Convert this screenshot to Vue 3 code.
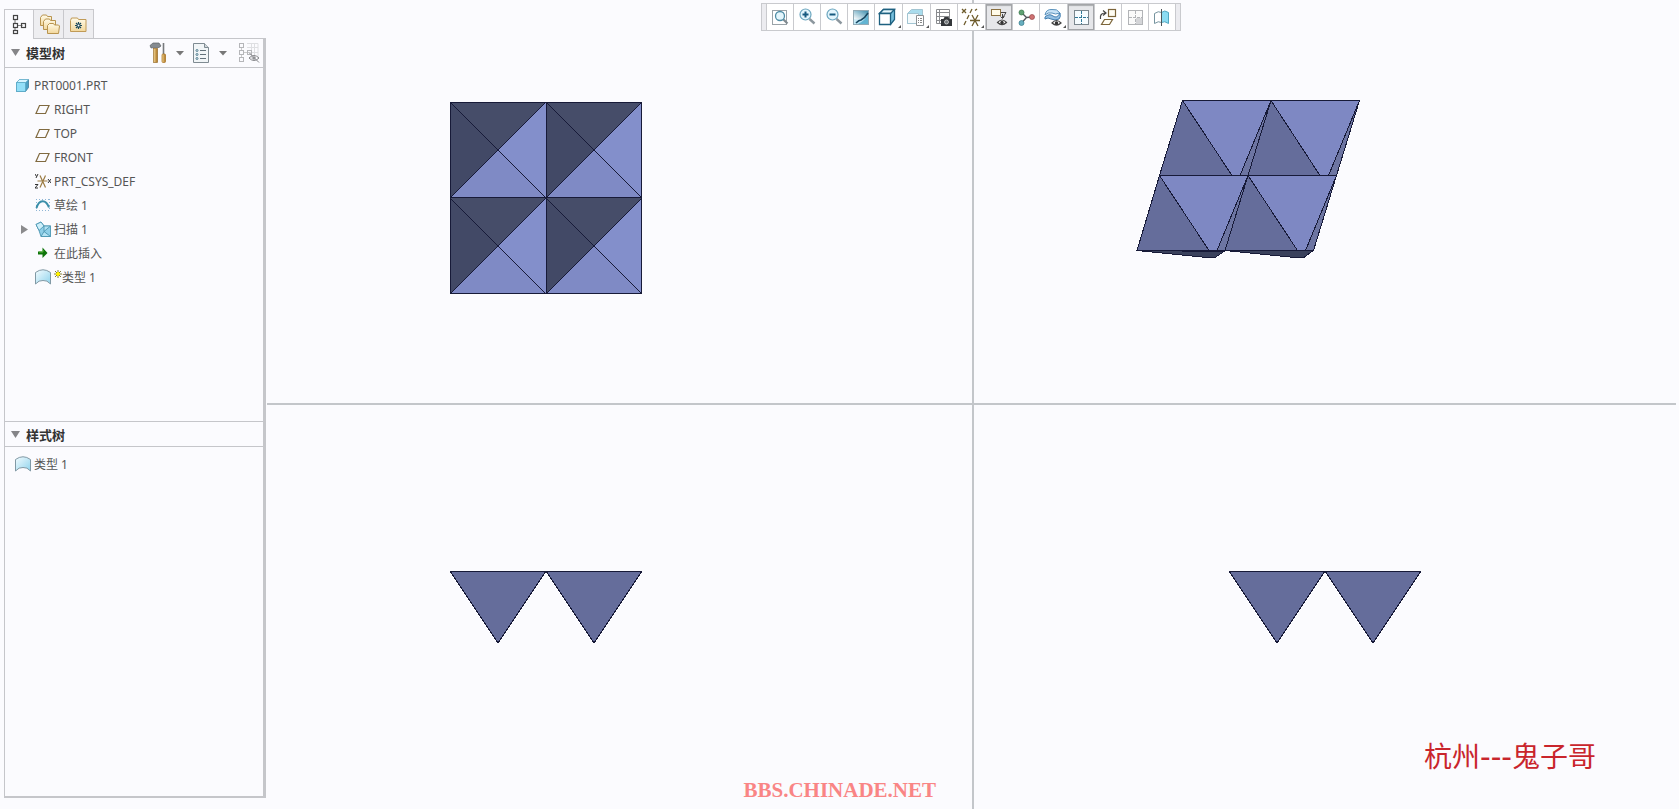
<script setup>
import { ref } from 'vue';

const activeTab = ref('model');
const modelOpen = ref(true);
const styleOpen = ref(true);

const modelTree = [
  { name: 'RIGHT', icon: 'plane' },
  { name: 'TOP', icon: 'plane' },
  { name: 'FRONT', icon: 'plane' },
  { name: 'PRT_CSYS_DEF', icon: 'csys' },
  { name: '草绘 1', icon: 'sketch' },
  { name: '扫描 1', icon: 'sweep', expandable: true },
  { name: '在此插入', icon: 'insert' },
  { name: '类型 1', icon: 'style', isNew: true }
];

// the two teeth in the front and side views
const frontTeeth = ['183,166 279,166 231,238', '279,166 375,166 327,238'];
const sideTeeth = ['255,166 351,166 303,238', '351,166 447,166 399,238'];

const pyramids = [
  { x: 183, y: 102 },
  { x: 279, y: 102 },
  { x: 183, y: 198 },
  { x: 279, y: 198 }
];
</script>

<template>
  <div class="app">
    <svg class="defs" aria-hidden="true">
      <defs>
        <linearGradient id="cyan" x1="0" y1="0" x2="1" y2="1">
          <stop offset="0" stop-color="#f4fcff" />
          <stop offset="1" stop-color="#8fd3ec" />
        </linearGradient>
        <linearGradient id="folder" x1="0" y1="0" x2="0" y2="1">
          <stop offset="0" stop-color="#fffbe9" />
          <stop offset="1" stop-color="#f2d79b" />
        </linearGradient>
        <linearGradient id="wood" x1="0" y1="0" x2="1" y2="0">
          <stop offset="0" stop-color="#f5d898" />
          <stop offset="1" stop-color="#a8701c" />
        </linearGradient>
        <linearGradient id="shade" x1="0" y1="1" x2="1" y2="0">
          <stop offset="0" stop-color="#ffffff" />
          <stop offset="1" stop-color="#3f8fae" />
        </linearGradient>
      </defs>
    </svg>

    <aside class="sidebar">
      <nav class="tabs">
        <button :class="{ active: activeTab === 'model' }" aria-label="模型树" @click="activeTab = 'model'">
          <svg width="28" height="28" fill="none" stroke="#444" stroke-width="1.2">
            <path d="M10 9v4M10 17v3M12.500 14.500h5" stroke="#888" />
            <rect x="8.500" y="4.500" width="4" height="4" />
            <rect x="8.500" y="12.500" width="4" height="4" />
            <rect x="8.500" y="19.500" width="4" height="3" />
            <rect x="16.500" y="12.500" width="4" height="4" />
          </svg>
        </button>
        <button :class="{ active: activeTab === 'folders' }" aria-label="文件夹" @click="activeTab = 'folders'">
          <svg width="28" height="28" fill="url(#folder)" stroke="#b8944f">
            <path d="M6.500 15.500v-8l2-2.500h4l1 1.500h4v9z" />
            <path d="M9.500 19.500v-8l2-2.500h4l1 1.500h5v9z" />
            <path d="M13.500 23.500v-8l2-2h4l1 1.500h4l1 1-1 7.500z" />
          </svg>
        </button>
        <button :class="{ active: activeTab === 'favorites' }" aria-label="收藏夹" @click="activeTab = 'favorites'">
          <svg width="28" height="28" fill="none">
            <path d="M6.500 21.500v-11l1-2.500h6l1 1.500h7.500v12z" fill="url(#folder)" stroke="#c09a56" />
            <path d="M14.500 12v7M11 15.500h7M12 13l5 5M17 13l-5 5" stroke="#1c4a5c" stroke-width="1.200" />
            <circle cx="14.500" cy="15.500" r="1" fill="#fff" />
          </svg>
        </button>
      </nav>

      <div class="panel">
        <section class="pane model-pane">
          <header class="pane-head">
            <button class="title" @click="modelOpen = !modelOpen">
              <svg width="10" height="8"><path d="M0 0h9L4.500 7z" fill="#858588" /></svg>
              模型树
            </button>
            <div class="pane-tools">
              <button aria-label="设置">
                <svg width="18" height="22" fill="none">
                  <path d="M1 3.500l3-2.500h6l2 3-2 1.500H5L2 6z" fill="#858b90" stroke="#5d6367" stroke-width=".7" />
                  <rect x="4.500" y="6.500" width="4" height="14" fill="url(#wood)" stroke="#99702e" stroke-width=".7" />
                  <path d="M14.500 1v11" stroke="#77797c" stroke-width="1.600" />
                  <rect x="13" y="12" width="3.500" height="8.500" rx="1" fill="url(#wood)" stroke="#a8701c" stroke-width=".7" />
                </svg>
              </button>
              <button aria-label="设置选项"><svg width="8" height="5"><path d="M0 0h8L4 4.500z" fill="#777" /></svg></button>
              <button aria-label="显示">
                <svg width="17" height="22" fill="none" stroke="#7f8b92">
                  <path d="M.5 1.500h11l4 4v15H.5z" fill="#f1f5f7" />
                  <path d="M11.500 1.500v4h4" fill="#cfd6da" />
                  <path d="M7 8.500h6M7 12.500h6M7 16.500h6" stroke="#63717a" />
                  <circle cx="4" cy="8.500" r="1" stroke="#527f91" />
                  <circle cx="4" cy="12.500" r="1" stroke="#527f91" />
                  <circle cx="4" cy="16.500" r="1" stroke="#527f91" />
                </svg>
              </button>
              <button aria-label="显示选项"><svg width="8" height="5"><path d="M0 0h8L4 4.500z" fill="#777" /></svg></button>
              <button class="hide-items" aria-label="隐藏项">
                <svg width="21" height="22" fill="none" stroke="#b5b6b9">
                  <path d="M8 1.500h11v14M8 5.500h11M8 10.500h11M12.500 2v15M15.500 2v12" stroke="#dedfe2" />
                  <path d="M2.500 6v3M2.500 13v3M5 10.500h4" stroke="#ccc" />
                  <rect x=".5" y="1.500" width="4" height="4" />
                  <rect x=".5" y="8.500" width="4" height="4" />
                  <rect x=".5" y="15.500" width="4" height="4" />
                  <rect x="8.500" y="8.500" width="4" height="4" />
                  <path d="M10 16q5-5 10 0q-5 5-10 0zM10 10.500l10 10" stroke="#838488" />
                  <circle cx="15" cy="16" r="1.500" fill="#838488" />
                </svg>
              </button>
            </div>
          </header>
          <ul v-if="modelOpen" class="tree">
            <li>
              <svg class="icon" width="16" height="16" stroke="#3c7e9c" stroke-width=".8">
                <path d="M1.500 5.500l3-3h9v8l-3 4h-9z" fill="#4ba0c4" />
                <path d="M1.500 5.500l3-3h9l-3 3z" fill="#d8f5ff" stroke="#6fb5cf" />
                <path d="M1.500 5.500h9v9h-9z" fill="#93dff8" stroke="#5aa9c6" />
              </svg>
              <span>PRT0001.PRT</span>
            </li>
            <li v-for="item in modelTree" :key="item.name">
              <button v-if="item.expandable" class="twisty" aria-label="展开">
                <svg width="8" height="9"><path d="M0 0v9l7-4.500z" fill="#8b8b8d" /></svg>
              </button>
              <span v-else class="twisty"></span>
              <svg v-if="item.icon === 'plane'" class="icon" width="16" height="16" fill="none">
                <path d="M4.500 4.500h9.500l-3.500 8H1z" stroke="#806a40" stroke-width="1.200" />
              </svg>
              <svg v-else-if="item.icon === 'csys'" class="icon" width="16" height="16" fill="none">
                <path d="M2.500 8h10M5 2.500l5.500 12M10.500 2.500L5 14.500" stroke="#9b7b42" stroke-width="1.200" />
                <path d="M0 1l1.500 2.500M3 1L1 5M0 11.500h3L0 15h3M13 6l3 4M16 6l-3 4" stroke="#333" />
              </svg>
              <svg v-else-if="item.icon === 'sketch'" class="icon" width="16" height="16" fill="none">
                <path d="M1 2.500h14M1 13.500h14M1.500 2v12M14.500 2v12" stroke="#8fb6d5" stroke-dasharray="1 2" />
                <path d="M1.500 11C4 2 11 2 14 10.500" stroke="#3b8fa9" stroke-width="2" />
              </svg>
              <svg v-else-if="item.icon === 'sweep'" class="icon" width="16" height="16" stroke="#4c96b2" stroke-width=".9">
                <path d="M1 3.500l5-2.500 3 4h6.500v10.500H6l-2-6z" fill="#8fcfe8" />
                <path d="M1 3.500l5-2.500 3 4-5 4.500z" fill="#cdeffa" />
                <path d="M9 5l0 5.500 6.500-5.500zM9 10.500l6.500 5H6z" fill="#b4e3f4" />
              </svg>
              <svg v-else-if="item.icon === 'insert'" class="icon" width="16" height="16">
                <path d="M3 6.500h4.500v-4l5 5.500-5 5v-3.500H3z" fill="#0e7409" />
                <path d="M4 7h4V5" fill="none" stroke="#59b53d" />
              </svg>
              <svg v-else class="icon" width="16" height="16">
                <path d="M.5 15V3.500Q8-2 15.500 3.500V15Q12 11 8 11.500Q4 11 .5 15z" fill="url(#cyan)" stroke="#8199a5" />
              </svg>
              <svg v-if="item.isNew" class="new" width="8" height="16" fill="none">
                <path d="M4 1v8M0 5h8M1 2l6 6M7 2L1 8" stroke="#858038" />
                <path d="M4 3v4M2 5h4" stroke="#fff200" stroke-width="2" />
              </svg>
              <span>{{ item.name }}</span>
            </li>
          </ul>
        </section>

        <section class="pane style-pane">
          <header class="pane-head">
            <button class="title" @click="styleOpen = !styleOpen">
              <svg width="10" height="8"><path d="M0 0h9L4.500 7z" fill="#858588" /></svg>
              样式树
            </button>
          </header>
          <ul v-if="styleOpen" class="tree">
            <li>
              <svg class="icon" width="16" height="16">
                <path d="M.5 15V3.500Q8-2 15.500 3.500V15Q12 11 8 11.500Q4 11 .5 15z" fill="url(#cyan)" stroke="#8199a5" />
              </svg>
              <span>类型 1</span>
            </li>
          </ul>
        </section>
      </div>
    </aside>

    <main class="workspace">
      <div class="view top left">
        <svg class="canvas" role="img" aria-label="俯视图">
          <g v-for="p in pyramids" :key="p.x + '-' + p.y" :transform="`translate(${p.x} ${p.y})`">
            <path d="M0 0h96L48 48z" fill="#464d69" />
            <path d="M0 0v96l48-48z" fill="#424966" />
            <path d="M96 0v96L48 48z" fill="#838fcb" />
            <path d="M0 96h96L48 48z" fill="#7f8ac5" />
            <path class="edge" d="M0 0l96 96M96 0L0 96" />
          </g>
          <path class="edge" d="M183.500 102.500h191v191h-191zM279.500 102.500v191M183.500 197.500h191" />
        </svg>
      </div>

      <div class="view top right">
        <svg class="canvas" role="img" aria-label="斜视图">
          <g class="edge">
            <path d="M163 250.500l70 7h8l9-6z" fill="#3a415c" />
            <path d="M251 250.500l70 7h9l9-7z" fill="#3a415c" />
            <path d="M208.500 100.500h177l-46 150H163z" fill="#6d75a2" />
            <path d="M208.500 100.500l49.500 75h-72.500z" fill="#656d9b" />
            <path d="M297 100.500l49 75h-72z" fill="#656d9b" />
            <path d="M185.500 175.500l49.500 75h-72z" fill="#656d9b" />
            <path d="M274 175.500l49.500 75H251z" fill="#656d9b" />
            <path d="M208.500 100.500H297l-31 75h-8z" fill="#7e88c3" />
            <path d="M297 100.500h88.500l-31 75H346z" fill="#7e88c3" />
            <path d="M185.500 175.500H274l-31 75h-8z" fill="#7e88c3" />
            <path d="M274 175.500h88.500l-31 75h-8z" fill="#7e88c3" />
          </g>
        </svg>
      </div>

      <div class="view left">
        <svg class="canvas" role="img" aria-label="前视图">
          <polygon v-for="t in frontTeeth" :key="t" class="edge tooth" :points="t" />
        </svg>
        <span class="site">BBS.CHINADE.NET</span>
      </div>

      <div class="view right">
        <svg class="canvas" role="img" aria-label="右视图">
          <polygon v-for="t in sideTeeth" :key="t" class="edge tooth" :points="t" />
        </svg>
        <span class="author">杭州<span class="dashes">---</span>鬼子哥</span>
      </div>

      <div class="toolbar" role="toolbar">
        <span class="grip"></span>
        <button aria-label="重新调整">
          <svg width="26" height="26" fill="none">
            <rect x="5.500" y="6.500" width="14" height="14" stroke="#9aa3a8" />
            <path d="M16 15l4.500 4.500" stroke="#808a90" stroke-width="2.200" />
            <circle cx="13" cy="12" r="4.500" fill="#e4f6fc" stroke="#4f8da6" stroke-width="1.300" />
          </svg>
        </button>
        <button aria-label="放大">
          <svg width="26" height="26" fill="none">
            <path d="M15.500 15l5 4.500" stroke="#8c979e" stroke-width="2.400" />
            <circle cx="11.500" cy="10.500" r="5.500" fill="#e2f5fc" stroke="#6ba6bf" stroke-width="1.200" />
            <path d="M8.500 10.500h6M11.500 7.500v6" stroke="#165a80" stroke-width="2" />
          </svg>
        </button>
        <button aria-label="缩小">
          <svg width="26" height="26" fill="none">
            <path d="M15.500 15l5 4.500" stroke="#8c979e" stroke-width="2.400" />
            <circle cx="11.500" cy="10.500" r="5.500" fill="#e2f5fc" stroke="#6ba6bf" stroke-width="1.200" />
            <path d="M8.500 10.500h6" stroke="#165a80" stroke-width="2" />
          </svg>
        </button>
        <button aria-label="重画">
          <svg width="26" height="26" fill="none">
            <rect x="5.500" y="6.500" width="15" height="14" fill="url(#cyan)" stroke="#92aab5" />
            <path d="M6 7h14v3q-4 7-14 5z" fill="url(#shade)" />
            <path d="M20 10v10H10q7-3 10-10z" fill="#62b4d2" />
            <path d="M8 19q3-3 5-3q4-2 7-7" stroke="#174761" stroke-width="1.600" />
          </svg>
        </button>
        <button class="wide" aria-label="显示样式">
          <svg width="27" height="26" stroke="#1e6180" stroke-width="1.300">
            <path d="M4.500 9.500l4-4h11v10l-4 5z" fill="#76bfdc" />
            <path d="M4.500 9.500l4-4h11l-4 4z" fill="#e5f7fd" />
            <path d="M4.500 9.500h11v11h-11z" fill="#fff" />
            <path d="M26 21v3h-3z" fill="#555" stroke="none" />
          </svg>
        </button>
        <button class="wide" aria-label="已保存方向">
          <svg width="27" height="26" stroke="#a2c5d2">
            <path d="M4.500 9.500l4-4h11v10l-4 4h-11z" fill="#a8dced" />
            <path d="M4.500 9.500h11v10h-11z" fill="#f4fafc" />
            <path d="M13.500 11.500h7v10h-7z" fill="#fff" stroke="#8b8f92" />
            <path d="M15 14.500h1M17 14.500h2M15 16.500h1M17 16.500h2M15 18.500h1M17 18.500h2" stroke="#888" />
            <path d="M26 21v3h-3z" fill="#555" stroke="none" />
          </svg>
        </button>
        <button aria-label="视图管理器">
          <svg width="26" height="26" fill="none">
            <path d="M5.500 5.500h13v14h-13zM5.500 8.500h13M5.500 12.500h13M5.500 16.500h13M8.500 5.500v14" stroke="#8a8c8f" />
            <path d="M10 15h2.500l1-2h4l1 2H21v7H10z" fill="#34373a" />
            <circle cx="15.500" cy="18" r="2" fill="#73787b" stroke="#e8e8e8" stroke-width=".7" />
          </svg>
        </button>
        <button class="wide" aria-label="基准显示过滤器">
          <svg width="27" height="26" fill="none" stroke="#6e5c2c" stroke-width="1.300">
            <path d="M4 5l4 4M8 5L4 9M12 9l2-4M9 15l2-4M6 21l2-4M17 6.500l2-1.500" />
            <path d="M12 16.500h10M14 11l6 11M20 11l-6 11" />
            <path d="M26 21v3h-3z" fill="#555" stroke="none" />
          </svg>
        </button>
        <button class="pressed" aria-label="注释显示">
          <svg width="26" height="26" fill="none">
            <rect x="5.500" y="5.500" width="9" height="6" fill="#fffbe8" stroke="#8a7141" />
            <path d="M15 8.500h5l-3 5M16.500 10v4M14.500 12.500l2 2 2-2" stroke="#444" />
            <path d="M11.500 18.500q4.500-5 9 0q-4.500 4-9 0z" fill="#fff" stroke="#444" stroke-width="1.200" />
            <circle cx="16" cy="18.500" r="1.700" fill="#333" />
          </svg>
        </button>
        <button aria-label="旋转中心">
          <svg width="26" height="26">
            <path d="M8.500 8.500l5 5 6-.5M13.500 13.500l-5 5.500" fill="none" stroke="#50565a" stroke-width="1.300" />
            <circle cx="8.500" cy="8.500" r="2.500" fill="#5fa173" stroke="#357448" stroke-width=".7" />
            <circle cx="19" cy="13" r="2.500" fill="#cf7272" stroke="#97494c" stroke-width=".7" />
            <circle cx="8.500" cy="19" r="2.500" fill="#68aebe" stroke="#357c8d" stroke-width=".7" />
          </svg>
        </button>
        <button class="wide" aria-label="样式显示过滤器">
          <svg width="27" height="26" fill="none">
            <path d="M5 11Q6 5 12 5.500Q17 4.500 20 9Q15 11 12 9Q8 8 5 11z" fill="#c7e3f7" stroke="#5b92bc" />
            <path d="M5 13q4-4 8-1t7-3q1 4-1 6-4 2-8 0-3-2-6 0z" fill="#94c0e3" stroke="#417eb0" />
            <path d="M12 19q4.500-5 9 0q-4.500 4-9 0z" fill="#fff" stroke="#444" stroke-width="1.200" />
            <circle cx="16.500" cy="19" r="1.700" fill="#333" />
            <path d="M26 21v3h-3z" fill="#555" stroke="none" />
          </svg>
        </button>
        <button class="pressed" aria-label="显示所有视图">
          <svg width="26" height="26" fill="none">
            <rect x="6.500" y="6.500" width="14" height="14" fill="#f6fcff" stroke="#7b878e" />
            <path d="M13.500 7v13M7 13.500h13" stroke="#2f7896" stroke-dasharray="3 1" />
          </svg>
        </button>
        <button aria-label="设置活动平面方向">
          <svg width="26" height="26" fill="none" stroke="#7c653a" stroke-width="1.200">
            <rect x="13.500" y="5.500" width="7" height="7" fill="#fffdf3" />
            <path d="M9.500 15.500h8l-3 5H6.500z" fill="#fffdf3" />
            <path d="M5.500 15q-1-6 5-6M8 6.500l3 2.500-3 2.500" stroke="#444" />
          </svg>
        </button>
        <button aria-label="活动视图">
          <svg width="26" height="26" fill="none" stroke="#b2b4b7">
            <rect x="6.500" y="6.500" width="14" height="14" fill="#fafafa" />
            <path d="M14 14h6v6h-6z" fill="#d4d5d8" stroke="none" />
            <path d="M13.500 7v13M7 13.500h13" stroke-dasharray="3 1" />
          </svg>
        </button>
        <button aria-label="镜像">
          <svg width="26" height="26" stroke="#76949f">
            <path d="M5.500 9.500q4-3 7-1v10q-3-2-7 1z" fill="#fff" />
            <path d="M12.500 8.500q3-3 7 0v11q-4-3-7-1z" fill="#8bdcf2" stroke="#52a8c2" />
            <path d="M12.500 5v17" stroke="#4c5457" />
          </svg>
        </button>
        <span class="grip end"></span>
      </div>
    </main>
  </div>
</template>

<style>
body {
  margin: 0;
  background: #fbfbfe;
}
</style>

<style scoped>
.app {
  display: flex;
  min-height: 100vh;
  background: #fbfbfe;
  color: #555;
  font-family: "Noto Sans", "Noto Sans CJK SC", sans-serif;
  font-size: 12px;
}

.defs {
  position: absolute;
  width: 0;
  height: 0;
}

button {
  padding: 0;
  border: none;
  background: none;
  color: inherit;
  font: inherit;
  cursor: pointer;
}

svg {
  display: block;
  flex: none;
}

/* sidebar */
.sidebar {
  display: flex;
  flex-direction: column;
  flex: none;
  box-sizing: border-box;
  width: 267px;
  padding: 9px 1px 11px 4px;
}

.tabs {
  display: flex;
  height: 29px;
}

.tabs button {
  box-sizing: border-box;
  width: 30px;
  border: 1px solid #c8c8cc;
  border-width: 1px 1px 0 0;
  background: #eeeef1;
}

.tabs button:first-child {
  border-left-width: 1px;
}

.tabs button.active {
  z-index: 1;
  margin-bottom: -1px;
  background: #fbfbfe;
}

.panel {
  display: flex;
  flex-direction: column;
  flex: 1;
  border: 1px solid #c5c6ca;
  border-right-width: 3px;
  border-bottom-width: 2px;
}

.pane {
  flex: 1 1 0;
}

.model-pane {
  flex-basis: 7px;
}

.pane-head {
  display: flex;
  align-items: center;
  justify-content: space-between;
  height: 28px;
  padding: 0 3px 0 6px;
  border-bottom: 1px solid #c5c6ca;
}

.style-pane .pane-head {
  height: 22px;
  padding-top: 2px;
  border-top: 1px solid #c5c6ca;
}

.title {
  display: flex;
  align-items: center;
  gap: 5px;
  color: #333;
  font-size: 13px;
  font-weight: bold;
  line-height: 20px;
}

.pane-tools {
  display: flex;
  align-items: center;
  gap: 9px;
}

.hide-items {
  margin-left: 3px;
}

.tree {
  margin: 0;
  padding: 5px 0 0 10px;
  list-style: none;
}

.tree li {
  display: flex;
  align-items: center;
  height: 24px;
  white-space: nowrap;
}

.icon {
  margin-right: 3px;
}

.twisty {
  display: flex;
  width: 20px;
  padding-left: 6px;
  box-sizing: border-box;
}

/* viewports */
.workspace {
  position: relative;
  display: grid;
  flex: 1;
  grid-template-columns: calc(50% + 1px) 1fr;
  grid-template-rows: 1fr 1fr;
}

.view {
  position: relative;
  overflow: hidden;
}

.view.left {
  border-right: 2px solid #c3c6ca;
}

.view.top {
  border-bottom: 2px solid #c3c6ca;
}

.view.top.right {
  margin-right: 3px;
}

.canvas {
  width: 100%;
  height: 100%;
}

.edge {
  stroke: #171a38;
  stroke-width: 1;
  fill: none;
  shape-rendering: crispEdges;
}

.tooth {
  fill: #656d9b;
}

.site {
  position: absolute;
  right: 36px;
  bottom: 7px;
  color: #f98585;
  font: bold 21px/24px "Liberation Serif", serif;
}

.author {
  position: absolute;
  right: 83px;
  bottom: 33px;
  color: #c9252c;
  font: 28px/40px "Noto Sans CJK SC", sans-serif;
}

.dashes {
  font-family: "Liberation Sans", sans-serif;
  font-size: 32px;
}

.toolbar {
  position: absolute;
  top: 3px;
  left: calc(50% - 212px);
  display: flex;
  box-sizing: border-box;
  height: 28px;
  border: 1px solid #c9cace;
  background: #fff;
}

.toolbar button {
  box-sizing: border-box;
  width: 27px;
  border-right: 1px solid #c9cace;
}

.toolbar button.wide {
  width: 28px;
}

.toolbar button.pressed {
  background: #e6e7ea;
  box-shadow: inset 0 0 0 1px #a3a5a8, inset 0 2px 1px #aaacb0;
}

.grip {
  width: 4px;
  border-right: 1px solid #c9cace;
  background: #ececf0;
}

.grip.end {
  border-right: none;
}
</style>
